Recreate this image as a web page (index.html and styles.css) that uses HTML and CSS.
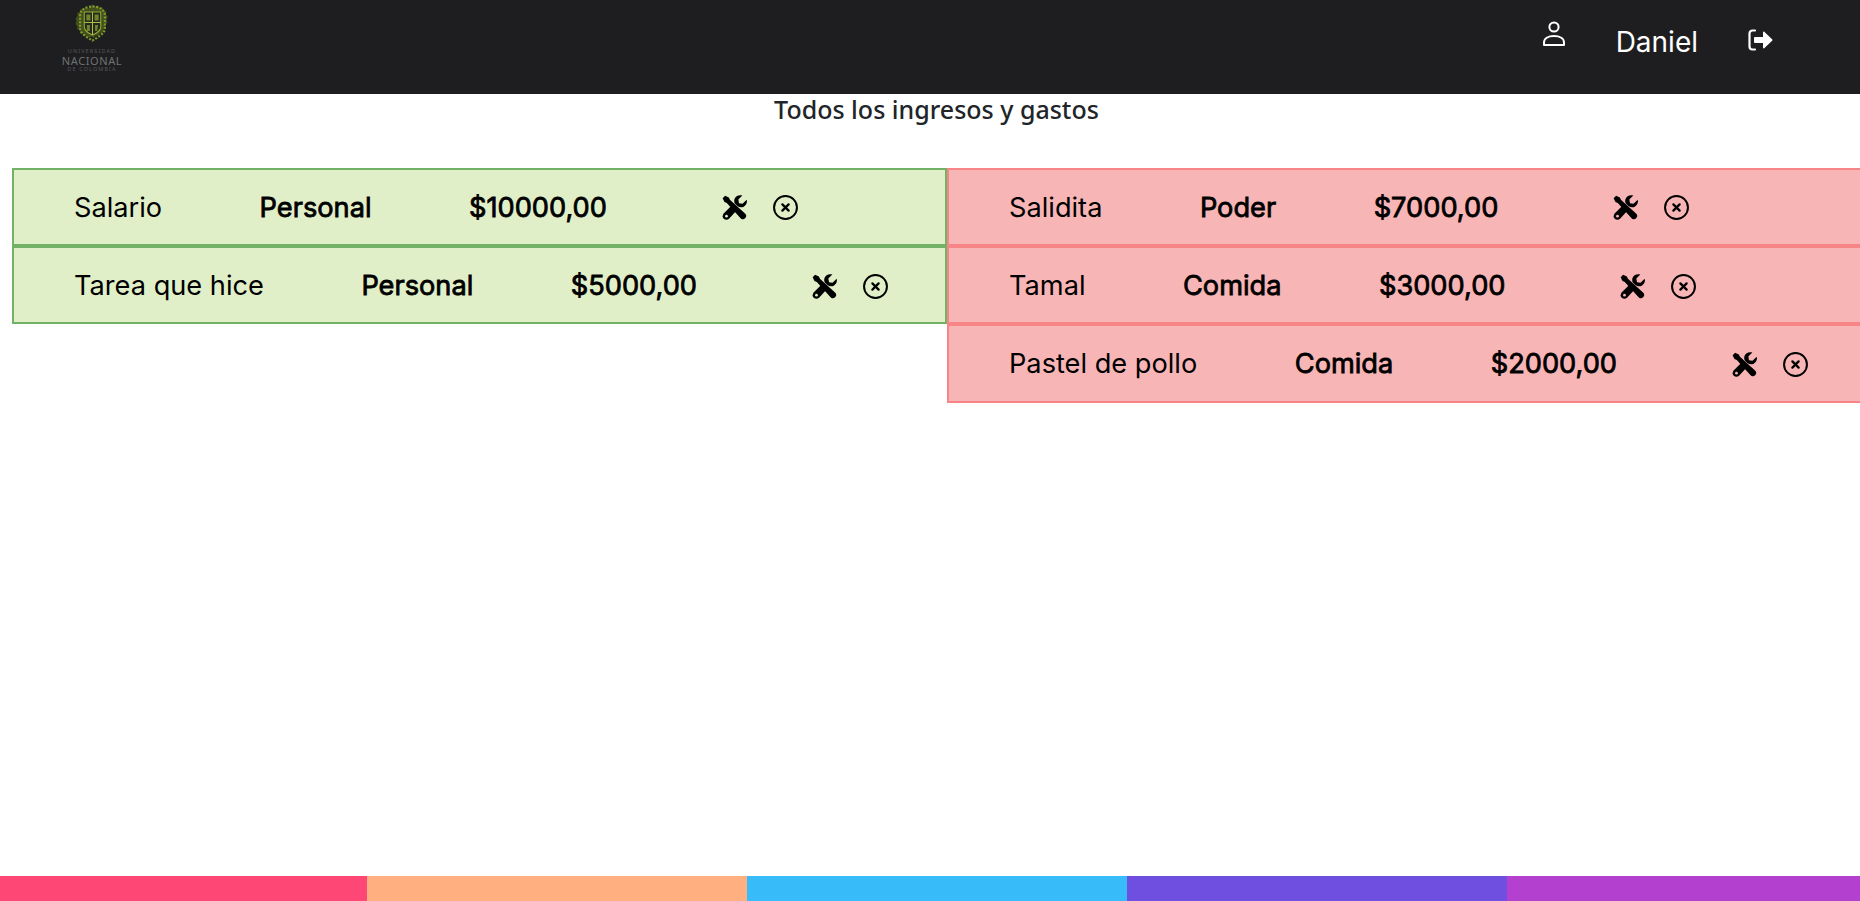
FILE: index.html
```html
<!DOCTYPE html>
<html lang="es">
<head>
<meta charset="utf-8">
<title>Todos los ingresos y gastos</title>
<link rel="stylesheet" href="styles.css">
</head>
<body>
<svg class="defs" width="0" height="0" aria-hidden="true">
  <symbol id="tools" viewBox="0 0 24 24">
    <path d="M.6 3 3 .6 6.600 2.400 7.600 4.600 21.600 17.200C23.600 19 23.800 20.300 22.400 22 20.700 23.800 19.200 23.600 17.400 21.800L4.600 7.600 2.400 6.600Z" fill="currentColor"/>
    <path d="M23.700 4.600 19.700 8.400 16.300 7.800 15.700 4.400 19.500.5C16.300-.5 13 .8 12 3.800 11.500 5.400 11.700 7 12.300 8.200L15 10.900C16.700 11.900 18.800 12.200 20.500 11.400 23.300 10 24.500 7.400 23.700 4.600Z" fill="currentColor"/>
    <path d="M9 10.200 13.800 15.200 7 22.600C5.400 24.200 3.200 24.300 1.700 22.800.2 21.300.3 19.100 1.800 17.500Z" fill="currentColor"/>
    <circle cx="4.300" cy="20.300" r="1.300" fill="var(--hole)"/>
  </symbol>
  <symbol id="cancel" viewBox="0 0 24 24">
    <circle cx="12" cy="12" r="11" fill="none" stroke="currentColor" stroke-width="1.900"/>
    <path d="M9 9l6 6M15 9l-6 6" fill="none" stroke="currentColor" stroke-width="2.200" stroke-linecap="round"/>
  </symbol>
</svg>

<header class="topbar">
  <div class="brand">
    <svg class="crest" viewBox="0 0 32 40" preserveAspectRatio="none" aria-hidden="true">
      <path d="M16 .5l2.500 2 3-1 1.500 2.500 3-.5.500 3 3 1-.5 3 2 2.500-1.500 2.500 1 3-2 2.500.5 3-2.500 1.500-.5 3-3 1-1 2.500-3-.5-1.500 2.500-2.500-1.500-2.500 1.500-1.500-2.500-3 .5-1-2.500-3-1-.5-3L1 25.500l.5-3-2-2.500 1-3L-.5 14.500 1.500 12l-.5-3 3-1 .5-3 3 .5L9 3.500l3 1Z" fill="#43501c"/>
      <path d="M16 2.500c6 0 12 3 12 9v13c0 5-7 9-12 12-5-3-12-7-12-12v-13c0-6 6-9 12-9Z" fill="none" stroke="#7f9a2c" stroke-width="2.200" stroke-dasharray="2 1.500"/>
      <path d="M8 8h16v15c0 4-4 6-8 8-4-2-8-4-8-8Z" fill="#26271f" stroke="#94ae37" stroke-width="1"/>
      <path d="M16 8v23M8 18.500h16" stroke="#a7c142" stroke-width="1"/>
      <path d="M10 10.500h4v6h-4ZM18 10.500h4v6h-4ZM10.500 21h3v6h-3ZM18.500 21h3l-1 6h-2Z" fill="#6f8529"/>
    </svg>
    <div class="brand-name">
      <span class="brand-small">UNIVERSIDAD</span>
      <span class="brand-main">NACIONAL</span>
      <span class="brand-small">DE COLOMBIA</span>
    </div>
  </div>
  <nav class="user-nav">
    <svg class="icon-person" viewBox="0 0 22 25" aria-hidden="true">
      <circle cx="11" cy="6" r="4.600" fill="none" stroke="currentColor" stroke-width="2"/>
      <path d="M1 24v-2.500C1 17.500 5 15 11 15s10 2.500 10 6.500V24Z" fill="none" stroke="currentColor" stroke-width="2" stroke-linejoin="round"/>
    </svg>
    <span class="user-name">Daniel</span>
    <svg class="icon-logout" viewBox="0 0 25 22" aria-hidden="true">
      <path d="M7 1.500H4.500A3 3 0 0 0 1.500 4.500v13a3 3 0 0 0 3 3H7" fill="none" stroke="currentColor" stroke-width="2.200" stroke-linecap="round"/>
      <path d="M7 8h8V3.500c0-.8.900-1.200 1.500-.6l7.600 7.300c.5.400.5 1.200 0 1.600l-7.600 7.300c-.6.600-1.500.2-1.500-.6V14H7c-.5 0-1-.5-1-1V9c0-.5.500-1 1-1Z" fill="currentColor"/>
    </svg>
  </nav>
</header>

<h1 class="title">Todos los ingresos y gastos</h1>

<main class="columns">
  <section class="column income">
    <article class="entry">
      <span class="entry-name">Salario</span>
      <strong class="entry-cat">Personal</strong>
      <strong class="entry-amount">$10000,00</strong>
      <span class="entry-actions"><svg class="icon"><use href="#tools"/></svg><svg class="icon"><use href="#cancel"/></svg></span>
    </article>
    <article class="entry">
      <span class="entry-name">Tarea que hice</span>
      <strong class="entry-cat">Personal</strong>
      <strong class="entry-amount">$5000,00</strong>
      <span class="entry-actions"><svg class="icon"><use href="#tools"/></svg><svg class="icon"><use href="#cancel"/></svg></span>
    </article>
  </section>
  <section class="column expense">
    <article class="entry">
      <span class="entry-name">Salidita</span>
      <strong class="entry-cat">Poder</strong>
      <strong class="entry-amount">$7000,00</strong>
      <span class="entry-actions"><svg class="icon"><use href="#tools"/></svg><svg class="icon"><use href="#cancel"/></svg></span>
    </article>
    <article class="entry">
      <span class="entry-name">Tamal</span>
      <strong class="entry-cat">Comida</strong>
      <strong class="entry-amount">$3000,00</strong>
      <span class="entry-actions"><svg class="icon"><use href="#tools"/></svg><svg class="icon"><use href="#cancel"/></svg></span>
    </article>
    <article class="entry">
      <span class="entry-name">Pastel de pollo</span>
      <strong class="entry-cat">Comida</strong>
      <strong class="entry-amount">$2000,00</strong>
      <span class="entry-actions"><svg class="icon"><use href="#tools"/></svg><svg class="icon"><use href="#cancel"/></svg></span>
    </article>
  </section>
</main>

<footer class="stripes">
  <div class="stripe s1"></div>
  <div class="stripe s2"></div>
  <div class="stripe s3"></div>
  <div class="stripe s4"></div>
  <div class="stripe s5"></div>
</footer>
</body>
</html>
```
FILE: styles.css
```css
* { box-sizing: border-box; }
html, body { height: 100%; }
body {
  margin: 0;
  height: 901px;
  overflow: hidden;
  display: flex;
  flex-direction: column;
  background: #fff;
  font-family: "Inter", sans-serif;
  color: #000;
}
.defs { position: absolute; }

.topbar {
  height: 94px;
  flex: none;
  background: #1e1e20;
  display: flex;
  justify-content: space-between;
  padding: 0 87px 0 62px;
  color: #fff;
}
.brand {
  width: 60px;
  display: flex;
  flex-direction: column;
  align-items: center;
  padding-top: 4px;
}
.crest { width: 33px; height: 40px; flex: none; overflow: visible; }
.brand-name {
  display: flex;
  flex-direction: column;
  align-items: center;
  margin-top: 4px;
  font-family: "Noto Sans", sans-serif;
  white-space: nowrap;
}
.brand-small { font-size: 5.500px; line-height: 7px; letter-spacing: 1.100px; color: #55565a; }
.brand-main { font-size: 11px; line-height: 11px; letter-spacing: .6px; color: #707173; }

.user-nav { display: flex; align-items: flex-start; }
.icon-person { width: 22px; height: 25px; margin-top: 21px; flex: none; }
.user-name { font-size: 28px; line-height: 36px; margin: 24px 0 0 51px; }
.icon-logout { width: 25px; height: 22px; margin: 29px 0 0 50px; flex: none; }

.title {
  margin: 0;
  height: 74px;
  padding-left: 13px;
  text-align: center;
  font-family: "Noto Sans", sans-serif;
  font-size: 25px;
  font-weight: 500;
  line-height: 30px;
  color: #212529;
}

.columns { display: flex; padding-left: 12px; flex: 1; min-height: 0; width: 1900px; }
.column { width: 935px; flex: none; }
.entry {
  height: 78.200px;
  border: 2px solid;
  display: flex;
  align-items: center;
  padding-left: 60px;
  font-size: 27.200px;
  line-height: 36px;
}
.entry > span:first-child, .entry > strong { padding-top: 2px; }
.income .entry { background: #e0efc8; border-color: #72b266; --hole: #e0efc8; }
.expense .entry { background: #f8b5b6; border-color: #f78587; --hole: #f8b5b6; }
.entry-cat, .entry-amount {
  margin-left: 97.500px;
  font-weight: 400;
  -webkit-text-stroke: 0.800px #000;
}
.entry-actions { margin-left: 115px; padding-top: 1.700px; display: flex; gap: 26px; }
.icon { width: 25px; height: 25px; display: block; }

.stripes { height: 25px; flex: none; display: flex; }
.stripe { height: 100%; }
.s1 { width: 367px; background: #ff4775; }
.s2 { width: 380px; background: #ffaf80; }
.s3 { width: 380px; background: #38bbf9; }
.s4 { width: 380px; background: #6e4fe0; }
.s5 { width: 353px; background: #b440d0; }
```
